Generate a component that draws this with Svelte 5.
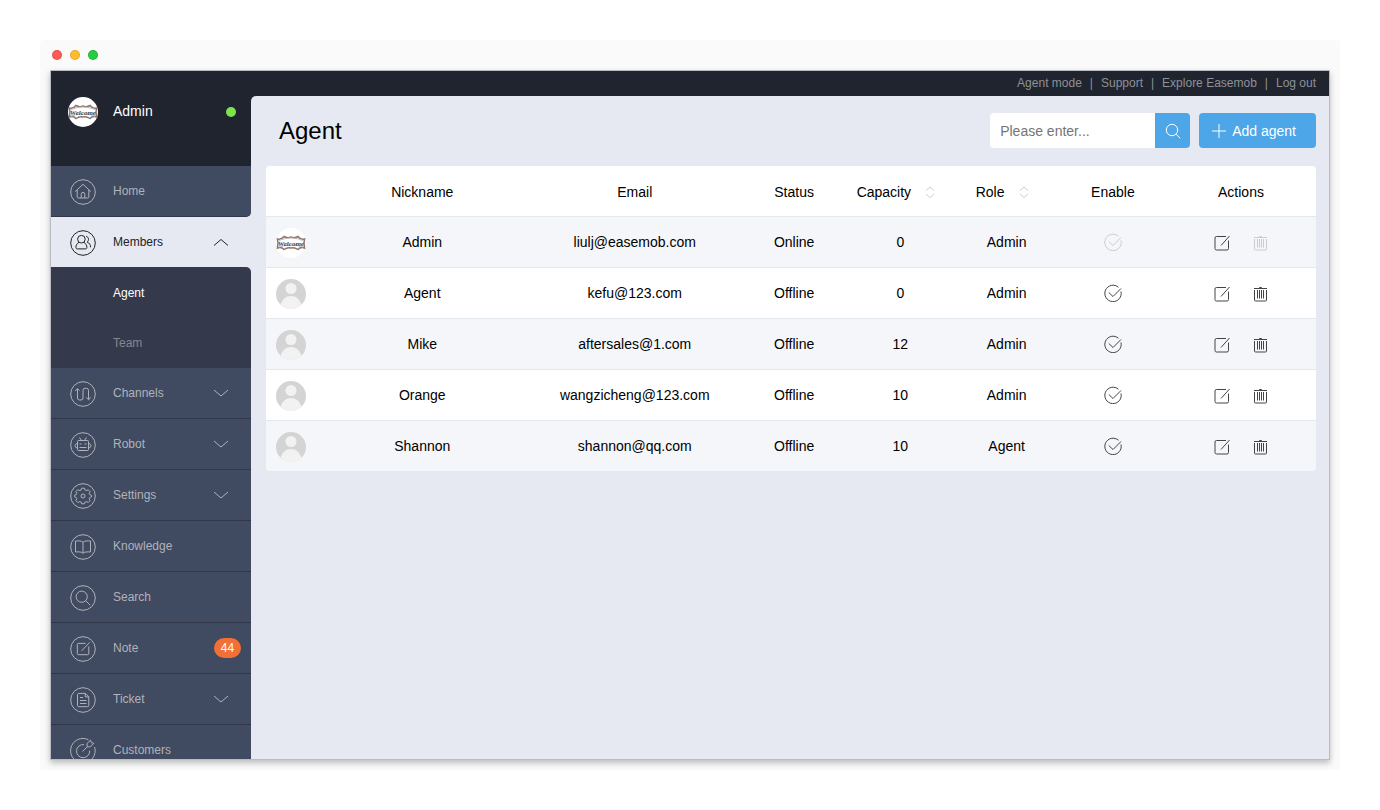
<script lang="ts">
	type NavItem = {
		id: string;
		label: string;
		children?: string[];
		badge?: number;
	};

	type Agent = {
		name: string;
		email: string;
		status: string;
		capacity: number;
		role: string;
		owner?: boolean;
	};

	const links = ['Agent mode', 'Support', 'Explore Easemob', 'Log out'];

	const nav: NavItem[] = [
		{ id: 'home', label: 'Home' },
		{ id: 'members', label: 'Members', children: ['Agent', 'Team'] },
		{ id: 'channels', label: 'Channels', children: [] },
		{ id: 'robot', label: 'Robot', children: [] },
		{ id: 'settings', label: 'Settings', children: [] },
		{ id: 'knowledge', label: 'Knowledge' },
		{ id: 'search', label: 'Search' },
		{ id: 'note', label: 'Note', badge: 44 },
		{ id: 'ticket', label: 'Ticket', children: [] },
		{ id: 'customers', label: 'Customers' }
	];

	const agents: Agent[] = [
		{ name: 'Admin', email: 'liulj@easemob.com', status: 'Online', capacity: 0, role: 'Admin', owner: true },
		{ name: 'Agent', email: 'kefu@123.com', status: 'Offline', capacity: 0, role: 'Admin' },
		{ name: 'Mike', email: 'aftersales@1.com', status: 'Offline', capacity: 12, role: 'Admin' },
		{ name: 'Orange', email: 'wangzicheng@123.com', status: 'Offline', capacity: 10, role: 'Admin' },
		{ name: 'Shannon', email: 'shannon@qq.com', status: 'Offline', capacity: 10, role: 'Agent' }
	];

	let open = $state('members');
	let page = $state('Agent');
	let query = $state('');
	let sortKey = $state<'capacity' | 'role' | null>(null);

	const rows = $derived.by(() => {
		const q = query.toLowerCase();
		const found = agents.filter((a) => (a.name + a.email).toLowerCase().includes(q));
		const key = sortKey;
		if (!key) return found;
		return found.sort((a, b) => (a[key] > b[key] ? 1 : a[key] < b[key] ? -1 : 0));
	});

	function toggle(id: string) {
		open = open === id ? '' : id;
	}
</script>

{#snippet navIcon(id: string)}
	<svg class="nav-icon" viewBox="0 0 26 26" aria-hidden="true">
		{#if id === 'customers'}
			<path d="M18.5 1.8A12.3 12.3 0 1 0 24.6 9" />
			<path d="M14 6.6a6.6 6.6 0 1 0 5.7 6" />
			<path d="M12.5 13.500l4.700-4.700M17.200 8.800l-.2-3.300 3.600-3.300.7 2.500 2.500.6-3.400 3.600z" />
		{:else}
			<circle cx="13" cy="13" r="12.3" />
		{/if}
		{#if id === 'home'}
			<path d="M5.2 12.6L13 5.3l7.8 7.3M7.2 11v6.8q0 1.2 1.2 1.2h9.2q1.2 0 1.2-1.2V11M11.2 19v-3.8a1.8 1.8 0 0 1 3.6 0V19" />
		{:else if id === 'members'}
			<circle cx="11.4" cy="9.2" r="3.8" />
			<path d="M9 12.3c-2 1.1-3.1 3-3.1 5.2 0 1 .5 1.4 1.4 1.4h8.2c.9 0 1.4-.4 1.4-1.4 0-2.2-1.1-4.1-3.1-5.2" />
			<path d="M16.2 6.3c2.6.8 3.2 4 .9 5.8 2.4 1 3.5 2.7 3.5 5.2" />
		{:else if id === 'channels'}
			<path d="M5.2 10l2.3-2.3 2 2M7.5 7.7V17q0 2 2 2H11q2 0 2-2V9.300q0-2 2-2h1.500q2 0 2 2v9M16.300 16.500l2.200 2.200 2.300-2.200" />
		{:else if id === 'robot'}
			<rect x="7.500" y="8.500" width="11" height="10" rx="1" />
			<path d="M9.500 5.500l2 3M16.500 5.500l-2 3M7 11.500q-2 .5-2 2.200t2 2.300M19 11.500q2 .5 2 2.200t-2 2.300M9.500 12h2M14.500 12h2M9.500 15.500h7" />
		{:else if id === 'settings'}
			<circle cx="13" cy="13" r="2" />
			<path
				d="M11 7l.6-1.800h2.800L15 7l1.300.6 1.900-.9 1.900 1.900-.9 1.900.5 1.200 1.800.6v1.500l-1.800.7-.5 1.200.9 1.900-1.900 1.900-1.900-.9L15 19l-.6 1.800h-2.800L11 19l-1.300-.4-1.900.9-1.900-1.900.9-1.900-.5-1.200-1.800-.7v-1.500l1.800-.6.5-1.200-.9-1.900 1.900-1.900 1.900.9z"
			/>
		{:else if id === 'knowledge'}
			<path d="M13 8.200c-1.500-1.400-4.500-1.500-7.500-1.200v11c3-.3 6-.2 7.500 1.200 1.500-1.400 4.500-1.500 7.500-1.200V7c-3-.3-6-.2-7.500 1.200zM13 8.200v11" />
		{:else if id === 'search'}
			<circle cx="11.700" cy="11.700" r="5.600" />
			<path d="M15.800 15.800l4.500 4.500" />
		{:else if id === 'note'}
			<path d="M15.500 7.400H8.300q-1 0-1 1v9.200q0 1.100 1 1.100h9.400q1.100 0 1.100-1.100V10.500M11.500 14.900l8.300-8.600" />
		{:else if id === 'ticket'}
			<path d="M15.500 6.400H8.800q-1.300 0-1.300 1.300v10.800q0 1.200 1.300 1.200h8.700q1.300 0 1.300-1.200V9.700zM15.300 6.600v3.300h3.400M10 10.500h3M10 13.500h6.500M10 16.500h6.500" />
		{/if}
	</svg>
{/snippet}

{#snippet searchIcon()}
	<svg class="icon" viewBox="0 0 18 18" aria-hidden="true">
		<circle cx="8" cy="8" r="5.700" />
		<path d="M12 12.200l4.300 4.200" />
	</svg>
{/snippet}

{#snippet welcomeAvatar()}
	<svg class="avatar" viewBox="0 0 30 30" role="img" aria-label="Admin avatar">
		<circle cx="15" cy="15" r="15" fill="#fff" />
		<path
			d="M1.500 11q4 1 6.500-2.500 3.500 2 7 .5 3.500 1.500 7-.5 2.500 3.500 6.500 2.500-1 4 0 9-4-1.500-6.500 1.500-3.500-2.500-7-1.500-3.500-1-7 1.500-2.500-3-6.500-1.500 1-5 0-9z"
			fill="none"
			stroke="#8d7671"
			stroke-width="1.500"
		/>
		<path d="M3 12.500q12-5 24 0M3 19q12-4 24 0" fill="none" stroke="#c8bcb8" stroke-width="1" />
		<text x="15" y="17.500" text-anchor="middle" class="welcome">Welcome</text>
	</svg>
{/snippet}

{#snippet userAvatar(name: string)}
	<svg class="avatar" viewBox="0 0 30 30" role="img" aria-label="{name} avatar">
		<circle cx="15" cy="15" r="15" fill="#d4d4d4" />
		<circle cx="15" cy="9.500" r="5.500" fill="#f2f2f2" />
		<path d="M4.500 25.700C6.500 20 10 17 15 17s8.500 3 10.500 8.700A15 15 0 0 1 4.500 25.700z" fill="#f2f2f2" />
	</svg>
{/snippet}

{#snippet sortButton(key: 'capacity' | 'role')}
	<button type="button" class="sort" aria-label="Sort by {key}" onclick={() => (sortKey = key)}>
		<svg viewBox="0 0 10 12" aria-hidden="true">
			<path d="M1 4.500l4-3.500 4 3.500M1 8l4 3.500L9 8" />
		</svg>
	</button>
{/snippet}

<div class="desktop">
	<div class="window">
		<div class="titlebar">
			<span class="light red"></span>
			<span class="light yellow"></span>
			<span class="light green"></span>
		</div>

		<div class="app">
			<aside class="sidebar">
				<div class="profile">
					{@render welcomeAvatar()}
					<span class="profile-name">Admin</span>
					<span class="online"></span>
				</div>

				<nav class="menu">
					{#each nav as item, i (item.id)}
						{@const active = open === item.id}
						{#if item.children}
							<button
								type="button"
								class="item"
								class:active
								aria-expanded={active}
								onclick={() => toggle(item.id)}
							>
								{@render navIcon(item.id)}
								<span class="label">{item.label}</span>
								<svg class="chevron" viewBox="0 0 16 8" aria-hidden="true">
									<path d={active ? 'M1 7.500l7-6 7 6' : 'M1 1l7 6 7-6'} />
								</svg>
							</button>
						{:else}
							<a href="#{item.id}" class="item" class:above={nav[i + 1]?.id === open}>
								{@render navIcon(item.id)}
								<span class="label">{item.label}</span>
								{#if item.badge}
									<span class="badge">{item.badge}</span>
								{/if}
							</a>
						{/if}
						{#if active && item.children?.length}
							<div class="submenu">
								{#each item.children as child (child)}
									<a
										href="#{child.toLowerCase()}"
										class="sub"
										class:current={page === child}
										onclick={() => (page = child)}>{child}</a
									>
								{/each}
							</div>
						{/if}
					{/each}
				</nav>
			</aside>

			<div class="content">
				<div class="topbar">
					{#each links as link, i (link)}
						{#if i > 0}<span>|</span>{/if}
						<a href="#top">{link}</a>
					{/each}
				</div>

				<main class="main">
					<header class="head">
						<h1>Agent</h1>
						<form class="search" onsubmit={(e) => e.preventDefault()}>
							<input type="text" placeholder="Please enter..." aria-label="Search agents" bind:value={query} />
							<button type="submit" aria-label="Search">{@render searchIcon()}</button>
						</form>
						<button type="button" class="add">
							<svg class="plus" viewBox="0 0 14 14" aria-hidden="true">
								<path d="M7 0v14M0 7h14" />
							</svg>
							Add agent
						</button>
					</header>

					<table>
						<thead>
							<tr>
								<th></th>
								<th>Nickname</th>
								<th>Email</th>
								<th>Status</th>
								<th class="sortable">Capacity {@render sortButton('capacity')}</th>
								<th class="sortable">Role {@render sortButton('role')}</th>
								<th>Enable</th>
								<th>Actions</th>
							</tr>
						</thead>
						<tbody>
							{#each rows as agent (agent.email)}
								<tr>
									<td class="photo">
										{#if agent.owner}
											{@render welcomeAvatar()}
										{:else}
											{@render userAvatar(agent.name)}
										{/if}
									</td>
									<td>{agent.name}</td>
									<td>{agent.email}</td>
									<td>{agent.status}</td>
									<td>{agent.capacity}</td>
									<td>{agent.role}</td>
									<td>
										<button type="button" class="action" disabled={agent.owner} aria-label="Enable {agent.name}">
											<svg class="icon" viewBox="0 0 18 18" aria-hidden="true">
												<path d="M14.500 3.300A8.200 8.200 0 1 0 17 7.500M4.800 8.500l4.200 4 8-8" />
											</svg>
										</button>
									</td>
									<td class="actions">
										<button type="button" class="action" aria-label="Edit {agent.name}">
											<svg class="icon" viewBox="0 0 18 18" aria-hidden="true">
												<path d="M13 3.500H3.500q-1.500 0-1.500 1.500v10.500q0 1.500 1.500 1.500H14q1.500 0 1.500-1.500V7.500M8 12.500l8.500-9.500" />
											</svg>
										</button>
										<button type="button" class="action" disabled={agent.owner} aria-label="Delete {agent.name}">
											<svg class="icon" viewBox="0 0 18 18" aria-hidden="true">
												<path d="M2 4.500h13M6.500 4.500l1-1h2l1 1M2.500 6v10q0 1 1 1h10q1 0 1-1V6M5.500 6v8.500M7.500 6v8.500M9.500 6v8.500M11.500 6v8.500" />
											</svg>
										</button>
									</td>
								</tr>
							{/each}
						</tbody>
					</table>
				</main>
			</div>
		</div>
	</div>
</div>

<style>
	:global(body) {
		margin: 0;
		background: #fff;
	}

	.desktop {
		box-sizing: border-box;
		height: 100vh;
		padding: 40px;
		font-family: 'Liberation Sans', Helvetica, Arial, sans-serif;
		font-size: 14px;
		color: #000;
	}

	a {
		color: inherit;
		text-decoration: none;
	}

	button {
		margin: 0;
		padding: 0;
		border: none;
		background: none;
		font: inherit;
		color: inherit;
		cursor: pointer;
	}

	svg {
		display: block;
		flex: none;
	}

	.window {
		box-sizing: border-box;
		display: flex;
		flex-direction: column;
		height: 100%;
		padding: 0 10px 10px;
		background: #fafafa;
		border-radius: 4px;
	}

	.titlebar {
		display: flex;
		flex: none;
		align-items: center;
		gap: 8px;
		height: 30px;
		padding-left: 2px;
	}

	.light {
		box-sizing: border-box;
		width: 10px;
		height: 10px;
		border: 1px solid rgba(0, 0, 0, 0.12);
		border-radius: 50%;
	}

	.red {
		background: #ff5b54;
	}

	.yellow {
		background: #ffbd2e;
	}

	.green {
		background: #28cc41;
	}

	.app {
		display: flex;
		flex: 1;
		min-height: 0;
		overflow: hidden;
		border: 1px solid #b9bcc2;
		background: #20242e;
		box-shadow: 0 3px 6px rgba(0, 0, 0, 0.25);
	}

	/* sidebar */
	.sidebar {
		display: flex;
		flex: none;
		flex-direction: column;
		width: 200px;
	}

	.profile {
		box-sizing: border-box;
		display: flex;
		flex: none;
		align-items: center;
		gap: 15px;
		height: 95px;
		padding: 0 15px 14px 17px;
		color: #fff;
	}

	.profile-name {
		flex: 1;
		padding-bottom: 2px;
	}

	.online {
		width: 10px;
		height: 10px;
		border-radius: 50%;
		background: #7fe34c;
	}

	.avatar {
		width: 30px;
		height: 30px;
	}

	.welcome {
		font: italic bold 7px 'Liberation Serif', serif;
		fill: #444;
	}

	.menu {
		flex: 1;
		overflow: hidden;
		background: #e6e9f2;
		font-size: 12px;
	}

	.item {
		box-sizing: border-box;
		display: flex;
		align-items: center;
		gap: 17px;
		width: 100%;
		height: 51px;
		padding: 0 10px 0 19px;
		border-bottom: 1px solid #313748;
		background: #404a60;
		color: #b0b3ba;
		text-align: left;
	}

	.above {
		border-bottom-right-radius: 5px;
	}

	.active {
		height: 50px;
		border-bottom: none;
		background: #e6e9f2;
		color: #222;
	}

	.label {
		flex: 1;
	}

	.nav-icon {
		width: 26px;
		height: 26px;
		padding-top: 1px;
		fill: none;
		stroke: currentColor;
		stroke-width: 1;
	}

	.chevron {
		width: 16px;
		height: 8px;
		margin-right: 12px;
		fill: none;
		stroke: currentColor;
		stroke-width: 1;
	}

	.badge {
		width: 27px;
		border-radius: 10px;
		background: #f26f36;
		color: #fff;
		line-height: 20px;
		text-align: center;
	}

	.submenu {
		padding-top: 1px;
		border-top-right-radius: 5px;
		background: #343a4b;
	}

	.sub {
		display: block;
		padding-left: 62px;
		color: #86888f;
		line-height: 50px;
	}

	.current {
		color: #fff;
	}

	/* content */
	.content {
		display: flex;
		flex: 1;
		flex-direction: column;
		min-width: 0;
	}

	.topbar {
		box-sizing: border-box;
		display: flex;
		flex: none;
		align-items: center;
		justify-content: flex-end;
		gap: 8px;
		height: 25px;
		padding: 0 13px 2px 0;
		color: #8e9197;
		font-size: 12px;
	}

	.main {
		flex: 1;
		padding: 0 13px 0 15px;
		border-top-left-radius: 5px;
		background: #e6e9f2;
	}

	.head {
		box-sizing: border-box;
		display: flex;
		align-items: center;
		height: 70px;
		padding: 0 0 1px 13px;
	}

	h1 {
		flex: 1;
		margin: 0;
		font-size: 24px;
		font-weight: 400;
	}

	.search {
		display: flex;
		height: 35px;
		margin-right: 9px;
		overflow: hidden;
		border-radius: 4px;
	}

	.search input {
		box-sizing: border-box;
		width: 165px;
		padding: 0 10px;
		border: none;
		border-radius: 0;
		outline: none;
		background: #fff;
		font: inherit;
	}

	.search input::placeholder {
		color: #757575;
	}

	.search button {
		display: flex;
		align-items: center;
		justify-content: center;
		width: 35px;
		background: #4ca6e8;
		color: #fff;
	}

	.add {
		display: flex;
		align-items: center;
		gap: 6px;
		height: 35px;
		padding: 0 20px 0 13px;
		border-radius: 4px;
		background: #4ca6e8;
		color: #fff;
	}

	.plus {
		width: 14px;
		height: 14px;
		stroke: currentColor;
	}

	.icon {
		width: 18px;
		height: 18px;
		fill: none;
		stroke: currentColor;
		stroke-width: 1;
	}

	table {
		display: block;
		overflow: hidden;
		border-radius: 4px;
		background: #fff;
	}

	thead,
	tbody {
		display: block;
	}

	tr {
		display: grid;
		grid-template-columns: 50px 2fr 2fr repeat(4, 1fr) 150px;
		height: 50px;
		border-bottom: 1px solid #e3e7ee;
	}

	tbody tr:nth-child(odd) {
		background: #f5f6fa;
	}

	tbody tr:last-child {
		border-bottom: none;
	}

	th,
	td {
		display: flex;
		align-items: center;
		justify-content: center;
		padding: 0;
		font-weight: 400;
	}

	th,
	.photo {
		padding-top: 2px;
	}

	.sortable {
		gap: 14px;
		padding-right: 9px;
	}

	.sort svg {
		width: 10px;
		height: 12px;
		fill: none;
		stroke: #ccc;
	}

	.actions {
		gap: 21px;
	}

	.action {
		color: #444;
	}

	.action:disabled {
		color: #ccc;
		cursor: default;
	}
</style>
